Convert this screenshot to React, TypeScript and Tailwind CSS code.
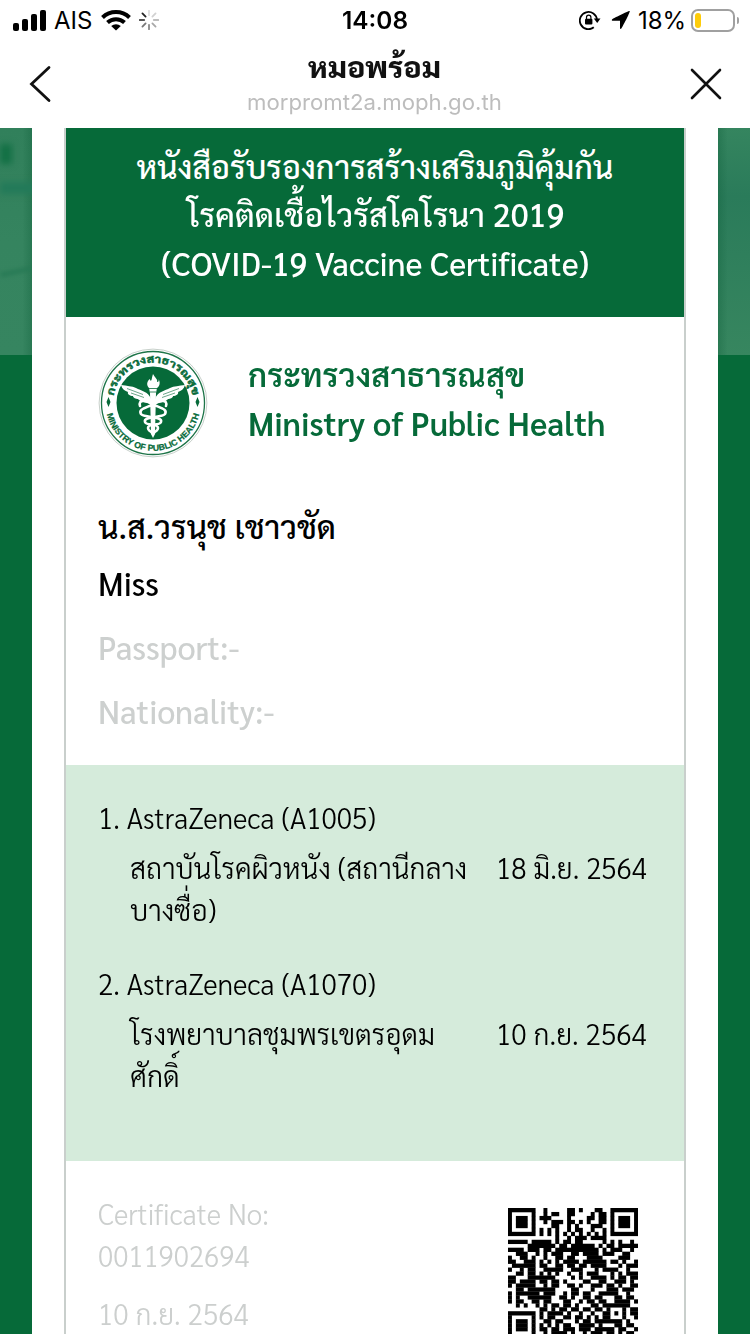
import { useLayoutEffect, useRef, useState, type ReactNode } from "react";

/** A single line of text, condensed or widened to fill its own box. */
function Line({ className, children }: { className: string; children: ReactNode }) {
  const box = useRef<HTMLSpanElement>(null);
  const text = useRef<HTMLSpanElement>(null);
  const [scale, setScale] = useState(1);
  useLayoutEffect(() => {
    if (box.current && text.current) {
      setScale(box.current.offsetWidth / text.current.offsetWidth);
    }
  }, []);
  return (
    <span ref={box} className={"block shrink-0 whitespace-nowrap " + className}>
      <span ref={text} className="inline-block origin-left" style={{ transform: `scaleX(${scale})` }}>
        {children}
      </span>
    </span>
  );
}

const QR_ROWS = [
  "#######..#.....##.#...##..#######",
  "#.....#..#.##..##....#.##.#.....#",
  "#.###.#.###....#....##.##.#.###.#",
  "#.###.#..#.###.##.#.#..##.#.###.#",
  "#.###.#....##..#.#...###..#.###.#",
  "#.....#.#.#.#..#.##..#..#.#.....#",
  "#######.#.#.#.#.#.#.#.#.#.#######",
  "............#..#.###.####........",
  "#####.#####.#.##.##.....#.#.#..#.",
  ".....#######.##.######.#.##.#####",
  "####.###.##.###########.#.###..#.",
  "..###..#.#.###..##.####.###..##..",
  "#..##.#..#..##.##...####....###..",
  "##..###.#.#.#.####.######.##.#..#",
  ".######.##..##.##.##.####...#.###",
  "#..#.##..#####..###...#.####..#..",
  "..##.##.#.#.#..#..#.###...#.#.###",
  "##...#######....#.#..####.#.##.##",
  "##.####.##.##.#....##..##..###.#.",
  "#.#####..#.##..##.#..###.##.#..##",
  "..##.#######....##...#...###.###.",
  "#.######.###..#.##.##..#####..#..",
  "#.#..######..##.#..##.##...##.##.",
  "#.##..##.##...##..#.##.##..####.#",
  "..#.#..#.#.##.##.#...##.#######..",
  "........##.#.##.##.##.##.#...#.##",
  "#######.#.####.#..#..#..##.#.#.##",
  "#.....#.#.##..##.##.#.#.##...#..#",
  "#.###.#..##.##...#.##.#######.#..",
  "#.###.#.#.#.#.##..####.#...##.##.",
  "#.###.#.##.##.###.###.#####.##..#",
  "#.....#..#.####.#..#.###.##.#.##.",
  "#######.##.#.##.#.##.#.#..###..#.",
];

function QrCode() {
  return (
    <svg viewBox="0 0 33 33" className="h-[131px] w-[130px]" preserveAspectRatio="none">
      {QR_ROWS.map((row, y) =>
        (row.match(/#+|\.+/g) ?? []).reduce<{ x: number; runs: ReactNode[] }>(
          (acc, run) => {
            if (run[0] === "#") {
              acc.runs.push(
                <rect key={acc.x} x={acc.x} y={y} width={run.length} height={1.08} fill="#000" />,
              );
            }
            acc.x += run.length;
            return acc;
          },
          { x: 0, runs: [] },
        ).runs,
      )}
    </svg>
  );
}

function Wing() {
  return (
    <g>
      <path
        d="M53 51 C50 43 43 43 38 40 C34 38 29 38 23 37 C24 41 27 43 30 44 C29 46 32 48 35 48 C35 50 38 51 40 51 C42 54 48 54 53 56Z"
        fill="#fff"
      />
      <path d="M29 40.500 L45 46.500 M33 45 L46 49.500" stroke="#066a39" strokeWidth="0.6" fill="none" />
    </g>
  );
}

function Emblem() {
  return (
    <svg viewBox="0 0 110 110" className="h-[110px] w-[110px]">
      <defs>
        <path id="arcTop" d="M15.500 61 A40 40 0 1 1 94.500 61" />
        <path id="arcBottom" d="M7.800 50 A47.500 47.500 0 1 0 102.200 50" />
      </defs>
      <circle cx="55" cy="55" r="53.900" fill="#fff" stroke="#b9c4bd" strokeWidth="0.8" />
      <circle cx="55" cy="55" r="51.500" fill="none" stroke="#1d7448" strokeWidth="1.300" />
      <circle cx="55" cy="55" r="36.500" fill="#066a39" />
      <text
        className="font-['Sarabun','Noto_Sans_Thai',sans-serif] text-[10.5px] font-bold"
        fill="#066a39"
        stroke="#066a39"
        strokeWidth="0.4"
      >
        <textPath href="#arcTop" startOffset="50%" textAnchor="middle" textLength="112" lengthAdjust="spacingAndGlyphs">
          กระทรวงสาธารณสุข
        </textPath>
      </text>
      <text
        className="font-['Liberation_Sans',sans-serif] text-[8.5px] font-bold"
        fill="#066a39"
        stroke="#066a39"
        strokeWidth="0.25"
      >
        <textPath href="#arcBottom" startOffset="50%" textAnchor="middle" textLength="127" lengthAdjust="spacingAndGlyphs">
          MINISTRY OF PUBLIC HEALTH
        </textPath>
      </text>
      <path d="M10.500 49 l2 5 l-2 5 l-2-5z M99.500 49 l2 5 l-2 5 l-2-5z" fill="#066a39" />
      <Wing />
      <g transform="translate(110 0) scale(-1 1)">
        <Wing />
      </g>
      <path
        d="M55 26 C57 30 60 31 59 34 C61 34 61 32 60.500 31 C63 35 61 39 59 40 L58 45 L57 86 L55 90 L53 86 L52 45 L51 40 C48 37 49 33 52 31 C52 33 53 33 53.500 32 C54 30 54 29 55 26Z"
        fill="#fff"
      />
      <path d="M50.500 40.500 h9 M52 44 h6" stroke="#066a39" strokeWidth="0.8" />
      <path
        d="M42 58 C40 51 48 52 54 56 C62 60 70 61 67 66 C64 70 45 68 47 74 C48 78 60 75 60 80 C60 83 57 84 54 85"
        fill="none"
        stroke="#fff"
        strokeWidth="2.600"
        strokeLinecap="round"
      />
      <path
        d="M68 58 C70 51 62 52 56 56 C48 60 40 61 43 66 C46 70 65 68 63 74 C62 78 50 75 50 80 C50 83 53 84 56 85"
        fill="none"
        stroke="#fff"
        strokeWidth="2.600"
        strokeLinecap="round"
      />
    </svg>
  );
}

const SPOKES = ["#dedede", "#d2d2d2", "#bdbdbd", "#a8a8a8", "#8a8a8a", "#777777", "#555555", "#222222"];

function StatusBar() {
  return (
    <div className="flex h-10 items-center font-['Inter',sans-serif] text-black">
      <div className="flex w-[342px] items-center pl-[13px]">
        <div className="flex h-[21px] w-[33px] items-end gap-[3px]">
          <i className="h-2 w-1.5 rounded-[2px] bg-black" />
          <i className="h-3 w-1.5 rounded-[2px] bg-black" />
          <i className="h-[17px] w-1.5 rounded-[2px] bg-black" />
          <i className="h-[21px] w-1.5 rounded-[2px] bg-black" />
        </div>
        <Line className="ml-2 w-[38px] pt-0.5 text-2xl leading-10">AIS</Line>
        <svg viewBox="0 0 30 22" className="ml-[9px] h-[22px] w-[30px]">
          <path d="M1.500 8.500 A19.500 19.500 0 0 1 28.500 8.500" fill="none" stroke="#000" strokeWidth="4" />
          <path d="M6.500 13.500 A12.500 12.500 0 0 1 23.500 13.500" fill="none" stroke="#000" strokeWidth="4" />
          <path d="M10.200 17 A7.200 7.200 0 0 1 19.800 17 L15 21.600Z" fill="#000" />
        </svg>
        <svg viewBox="-10 -10 20 20" className="ml-[8px] h-5 w-5">
          {SPOKES.map((color, i) => (
            <line key={color} y1="-9.300" y2="-4.800" stroke={color} strokeWidth="1.800" strokeLinecap="round" transform={`rotate(${i * 45})`} />
          ))}
        </svg>
      </div>
      <Line className="w-[66px] pt-0.5 text-2xl leading-10 font-semibold">14:08</Line>
      <div className="flex flex-1 items-center">
        <svg viewBox="0 0 22 20" className="ml-[171px] h-5 w-[22px]">
          <path d="M14.800 17.300 A8.600 8.600 0 1 1 18 10" fill="none" stroke="#000" strokeWidth="1.800" />
          <path d="M14.800 8.500 h6.700 l-3.300 4.500z" fill="#000" />
          <rect x="6" y="8.700" width="7.400" height="5.800" rx="1" fill="#000" />
          <path d="M7.500 9 V7.300 A2.200 2.200 0 0 1 11.900 7.300 V9" fill="none" stroke="#000" strokeWidth="1.200" />
        </svg>
        <svg viewBox="0 0 20 20" className="ml-[10px] h-5 w-5">
          <path d="M18.800 1 C17 .8 2 8.500 1 9.500 C.5 10.200 1 10.800 1.800 10.800 H9 V18 C9 19 9.800 19.300 10.500 18.300 C11.500 17 18.900 3 18.800 1Z" fill="#000" />
        </svg>
        <Line className="ml-[7px] w-[48px] pt-0.5 text-2xl leading-10">18%</Line>
        <div className="ml-[5px] flex h-[23px] w-[44px] items-center rounded-[7px] border-2 border-[#a0a0a0] pl-0.5">
          <i className="h-[15px] w-1.5 rounded-full bg-[#fecc0a]" />
        </div>
        <i className="ml-[2px] h-[7px] w-[2px] rounded-r-full bg-[#a0a0a0]" />
      </div>
    </div>
  );
}

function NavBar() {
  return (
    <div className="flex h-[88px] items-start justify-between px-[28px]">
      <svg viewBox="0 0 24 40" className="mt-6 h-10 w-6">
        <path d="M21 3.500 L3.500 20 L21 36.500" fill="none" stroke="#111" strokeWidth="2.800" strokeLinecap="round" />
      </svg>
      <div className="flex flex-col items-center pl-[7px]">
        <Line className="mt-1 h-[46px] w-[133px] text-[29px] leading-[44px] font-extrabold text-[#111]">หมอพร้อม</Line>
        <Line className="h-6 w-[255px] font-['Inter',sans-serif] text-[22px] leading-6 text-[#bdbdbd]">
          morpromt2a.moph.go.th
        </Line>
      </div>
      <svg viewBox="0 0 32 32" className="mt-7 h-8 w-8">
        <path d="M2 2 L30 30 M30 2 L2 30" stroke="#111" strokeWidth="2.600" strokeLinecap="round" />
      </svg>
    </div>
  );
}

export default function App() {
  return (
    <div className="flex h-[1334px] w-[750px] flex-col overflow-hidden bg-white font-['Sarabun','Noto_Sans_Thai',sans-serif] text-black">
      <header>
        <StatusBar />
        <NavBar />
      </header>
      <main className="flex flex-1 bg-[#066a39]">
        <div className="h-[227px] w-8 overflow-hidden bg-linear-to-b from-[#31805b] via-[#35845f] via-50% to-[#368560]">
          <div className="h-full bg-linear-to-r from-transparent from-70% to-[#0a5a35]/30 pt-[16px]">
            <div className="h-5 w-3 bg-[#137045] blur-[3px]" />
            <div className="mt-[18px] h-3 w-10 bg-[#237a59] blur-[3px]" />
            <div className="mt-[74px] h-1 w-12 -rotate-12 bg-[#257853] blur-[2px]" />
          </div>
        </div>
        <div className="h-[1206px] w-[686px] bg-white px-8">
          <article className="h-full border-x-2 border-[#c9cfcc]">
            <h1 className="flex h-[189px] flex-col items-center bg-[#066a39] pt-[14px] text-[32px] leading-[48px] font-medium text-white">
              <Line className="h-12 w-[477px]">หนังสือรับรองการสร้างเสริมภูมิคุ้มกัน</Line>
              <Line className="h-12 w-[377px] text-[33px]">โรคติดเชื้อไวรัสโคโรนา 2019</Line>
              <Line className="h-12 w-[428px] text-[34px]">(COVID-19 Vaccine Certificate)</Line>
            </h1>
            <section className="flex h-[176px] pt-[31px] pl-8">
              <Emblem />
              <div className="ml-[40px] pt-0.5 text-[32px] leading-[48px] font-semibold text-[#066a39]">
                <Line className="h-12 w-[277px]">กระทรวงสาธารณสุข</Line>
                <Line className="h-12 w-[357px] text-[34px]">Ministry of Public Health</Line>
              </div>
            </section>
            <section className="h-[272px] pt-[9px] pl-8 text-[34px] leading-[48px] font-medium">
              <Line className="h-12 w-[238px] text-[32px]">น.ส.วรนุช เชาวชัด</Line>
              <Line className="mt-2 h-12 w-[61px]">Miss</Line>
              <Line className="mt-4 h-12 w-[141px] text-[#cdd0cf]">Passport:-</Line>
              <Line className="mt-4 h-12 w-[176px] text-[#cdd0cf]">Nationality:-</Line>
            </section>
            <section className="h-[396px] bg-[#d5ebdb] pt-[31px] pl-8 text-[29px] leading-[42px] font-light">
              <Line className="h-[42px] w-[278px] text-[30px]">1. AstraZeneca (A1005)</Line>
              <div className="mt-2 flex pl-8">
                <div className="w-[366px]">
                  <Line className="h-[42px] w-[337px]">สถาบันโรคผิวหนัง (สถานีกลาง</Line>
                  <Line className="h-[42px] w-[86px]">บางซื่อ)</Line>
                </div>
                <Line className="h-[42px] w-[151px]">18 มิ.ย. 2564</Line>
              </div>
              <Line className="mt-8 h-[42px] w-[278px] text-[30px]">2. AstraZeneca (A1070)</Line>
              <div className="mt-2 flex pl-8">
                <div className="w-[366px]">
                  <Line className="h-[42px] w-[305px]">โรงพยาบาลชุมพรเขตรอุดม</Line>
                  <Line className="h-[42px] w-[50px]">ศักดิ์</Line>
                </div>
                <Line className="h-[42px] w-[151px]">10 ก.ย. 2564</Line>
              </div>
            </section>
            <section className="flex h-[173px] overflow-hidden pl-8 text-[29px] leading-[42px] font-light text-[#cccfce]">
              <div className="w-[410px] pt-[31px]">
                <Line className="h-[42px] w-[171px] text-[30px]">Certificate No:</Line>
                <Line className="h-[42px] w-[152px] text-[30px]">0011902694</Line>
                <Line className="mt-4 h-[42px] w-[151px]">10 ก.ย. 2564</Line>
              </div>
              <div className="pt-[47px]">
                <QrCode />
              </div>
            </section>
          </article>
        </div>
        <div className="h-[227px] w-8 bg-linear-to-b from-[#35855f] via-[#2a7b5a] via-30% to-[#37865f]">
          <div className="h-full bg-linear-to-l from-transparent from-70% to-[#0a5a35]/30" />
        </div>
      </main>
    </div>
  );
}
